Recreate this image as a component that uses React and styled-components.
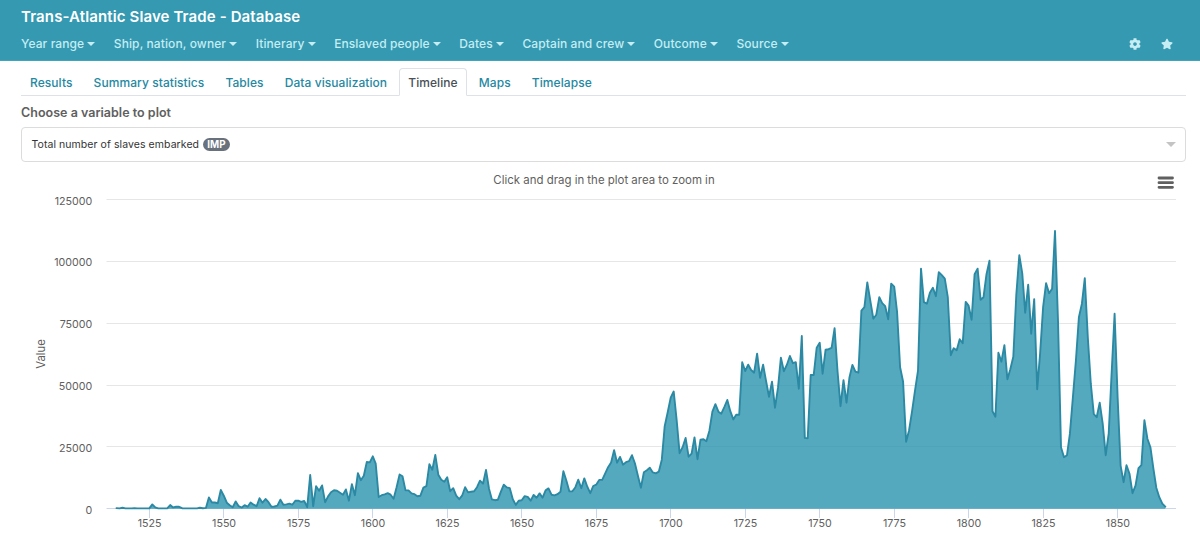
import { useState } from "react";
import styled, { createGlobalStyle } from "styled-components";
import { FaCog, FaStar } from "react-icons/fa";

const GlobalStyle = createGlobalStyle`
  body {
    margin: 0;
    background: #fff;
    font-family: Inter, "Liberation Sans", sans-serif;
  }
`

const StyledHeader = styled.header`
  box-sizing: border-box;
  height: 61px;
  padding: 7px 26.6px 0 21px;
  background-color: #3499b1;
  border-bottom: 1px solid #43a3b9;
`

const StyledTitle = styled.h1`
  margin: 0;
  font-size: 15px;
  line-height: 19px;
  font-weight: 600;
  letter-spacing: 0.12px;
  color: #fff;
`

const StyledNav = styled.nav`
  display: flex;
  align-items: center;
  gap: 18.6px;
  height: 16px;
  margin-top: 10px;
  color: #c5edf3;
`

const StyledNavItem = styled.span`
  display: flex;
  align-items: center;
  gap: 3px;
  font-size: 12px;
  line-height: 16px;
  font-weight: 500;
  letter-spacing: 0.1px;
  white-space: nowrap;
  cursor: pointer;
`

const StyledCaret = styled.i`
  border: ${(props) => props.$size}px solid transparent;
  border-top-color: ${(props) => props.$color};
  border-bottom: 0;
`

const StyledActions = styled.div`
  display: flex;
  gap: 20px;
  margin-left: auto;
`

const StyledMain = styled.main`
  padding: 7px 14px 0 21px;
`

const StyledTabs = styled.div`
  display: flex;
  gap: 3.1px;
  height: 27px;
  border-bottom: 1px solid #dee2e6;
`

const StyledTab = styled.button`
  box-sizing: border-box;
  height: 28px;
  padding: 0 8px;
  border: 1px solid ${(props) => (props.$active ? "#dee2e6" : "transparent")};
  border-bottom-color: ${(props) => (props.$active ? "#fff" : "transparent")};
  border-radius: 4px 4px 0 0;
  background: ${(props) => (props.$active ? "#fff" : "none")};
  color: ${(props) => (props.$active ? "#495057" : "#2488a2")};
  font-family: inherit;
  font-size: 12px;
  font-weight: 500;
  letter-spacing: 0.07px;
  white-space: nowrap;
  cursor: pointer;
`

const StyledLabel = styled.div`
  margin-top: 9px;
  font-size: 12.5px;
  line-height: 16px;
  font-weight: 600;
  letter-spacing: 0.02px;
  color: #606060;
`

const StyledSelect = styled.div`
  box-sizing: border-box;
  display: flex;
  align-items: center;
  height: 35px;
  margin-top: 6px;
  padding: 0 9px 0 9.5px;
  border: 1px solid #dcdcdc;
  border-radius: 4px;
  font-size: 10.5px;
  letter-spacing: 0.07px;
  color: #333;
`

const StyledBadge = styled.span`
  margin: 0 auto 0 4px;
  padding: 0 4.2px;
  border-radius: 7px;
  background-color: #68717c;
  color: #fff;
  font-size: 9.8px;
  line-height: 13.5px;
  font-weight: 700;
`

const StyledChart = styled.svg`
  display: block;
  width: 1200px;
  height: 389px;
  margin-left: -21px;
  font-family: Inter, "Liberation Sans", sans-serif;
  fill: #606060;
`

const StyledTick = styled.text`
  font-size: 10.7px;
`

const StyledChartText = styled.text`
  font-size: ${(props) => props.$size}px;
  text-anchor: middle;
`

const menus = [
  "Year range",
  "Ship, nation, owner",
  "Itinerary",
  "Enslaved people",
  "Dates",
  "Captain and crew",
  "Outcome",
  "Source",
];

const tabs = [
  "Results",
  "Summary statistics",
  "Tables",
  "Data visualization",
  "Timeline",
  "Maps",
  "Timelapse",
];

const FIRST_YEAR = 1514;

// one point per year, as height above the baseline
const heights = [
  0.6, 0.3, 0.9, 0.3, 0.3, 0.3, 0.4, 0.3, 0.3, 0.3, 0.3, 0.3, 4.3, 1.3, 0.3, 0.3,
  0.3, 0.3, 3.6, 1.3, 1.9, 1.9, 0.5, 0.3, 0.3, 0.3, 0.3, 0.3, 0.9, 0.4, 0.8,
  11.3, 6.2, 6.2, 5.5, 18.7,
  13, 6, 3.5, 1.5, 7.3, 2.5, 1.2, 3.5, 2, 6.2,
  4, 2.5, 10.5, 6, 9.7, 6.5, 2, 2.2, 3, 9,
  4, 4.3, 5, 4, 8, 8, 6.8, 7.7, 1.5, 33.7,
  2.5, 22.5, 18, 23.3, 6.5, 12.3, 16.5, 18.5, 18, 16,
  14, 19.3, 8, 24.5, 13.5, 35.5, 28.5, 33, 46.7, 46.3,
  52.4, 45, 11.7, 13.5, 14.3, 15.5, 14, 10, 21.5, 34.2,
  32.5, 18.3, 18.3, 15.3, 14.5, 12.5, 13, 21, 22.5, 44.5,
  39, 53.8, 34, 29, 27, 31.5, 17.5, 20.5, 13, 9.5,
  13, 21.5, 16.3, 17, 17.5, 21.5, 28, 25, 38.8, 20,
  9.3, 8.5, 9, 17, 24, 21.3, 20.5, 9.5, 3.8, 8,
  8.5, 12.6, 11.8, 8, 13.8, 11, 15.3, 11, 18.3, 20.3,
  14, 13.3, 14.5, 17, 37.5, 28, 17.3, 17.5, 21.5, 29,
  20.5, 30.3, 22, 15.5, 22.7, 24, 28.8, 28.8, 35, 41.5,
  46.3, 58.5, 46, 51.8, 44, 46.5, 47.5, 53.5, 45.5, 33,
  21, 36.5, 38.5, 41, 36.3, 35.3, 37, 49, 82.5, 96.5,
  111, 117.2, 88, 55.5, 61.5, 70.7, 52, 55, 71.3, 49.5,
  69, 69.5, 67.5, 78, 97, 104.5, 97, 95, 101.5, 108.7,
  97.5, 89.3, 94, 94, 146.5, 137.7, 144, 138.7, 136, 155,
  131, 144, 128, 112, 127, 101, 121, 151, 137.5, 144,
  152.7, 145.5, 146.5, 120, 172.7, 70.8, 70.5, 133.7, 133.7, 161,
  166, 135, 159, 159.5, 160.8, 180.5, 138, 102.5, 128.5, 106,
  131.5, 143.8, 137, 136, 198, 201.5, 226.3, 208, 190, 194,
  211.5, 205.5, 202.5, 189.5, 225, 222, 196.5, 141.5, 127, 67,
  78, 97, 118, 138, 240, 206.5, 205, 216, 221, 212.5,
  236.5, 233.5, 230, 211.5, 153.5, 160.5, 158.5, 169.5, 165.5, 206.8,
  203, 189, 234.5, 240, 209, 211.5, 234.5, 248, 97.5, 92,
  156, 147, 163.5, 129.5, 139.5, 152, 214, 253.5, 235, 196,
  224, 175, 209.5, 119.5, 155, 201.5, 225.5, 215.5, 220, 277.7,
  188, 61.5, 51.5, 53.5, 75, 111.5, 148, 191.5, 205, 230.5,
  171.5, 125, 94.5, 91.5, 106, 85, 53.5, 75, 135, 195,
  112, 43, 26.5, 43.5, 35, 15.5, 23, 40.5, 43.5, 88.5,
  70, 61.5, 40, 21, 11.5, 5, 2,
];

const yTicks = [0, 25000, 50000, 75000, 100000, 125000];
const xTicks = [1525, 1550, 1575, 1600, 1625, 1650, 1675, 1700, 1725, 1750, 1775, 1800, 1825, 1850];

const BASE = 346.7;
const getX = (year) => 149.3 + (year - 1525) * 2.9794;
const getY = (value) => BASE - value * 0.002472;
// half pixel keeps the 1px lines sharp
const snap = (n) => Math.floor(n) + 0.5;

const TimelineChart = () => {
  const points = heights.map((h, i) => `${getX(FIRST_YEAR + i).toFixed(1)},${(BASE - h).toFixed(1)}`);
  const line = "M" + points.join("L");
  const lastX = getX(FIRST_YEAR + heights.length - 1);

  return (
    <StyledChart viewBox="0 0 1200 389">
      <StyledChartText x="604" y="22.4" $size={11.45}>Click and drag in the plot area to zoom in</StyledChartText>
      <path d="M1159 16h13.5M1159 20.7h13.5M1159 25.3h13.5" stroke="#606060" strokeWidth="2.8" strokeLinecap="round" />
      {
        yTicks.map((value) =>
          <g key={value}>
            <path d={`M106.5 ${snap(getY(value))}H1176`} stroke={value ? "#e6e6e6" : "#ccd6eb"} />
            <StyledTick x="92.3" y={getY(value) + 4.8} textAnchor="end">{value}</StyledTick>
          </g>
        )
      }
      {
        xTicks.map((year) =>
          <g key={year}>
            <path d={`M${snap(getX(year))} 347v9`} stroke="#ccd6eb" />
            <StyledTick x={getX(year) + 0.3} y="364.8" textAnchor="middle">{year}</StyledTick>
          </g>
        )
      }
      <path d={`${line}L${lastX} ${BASE}L${getX(FIRST_YEAR)} ${BASE}Z`} fill="#2a93af" fillOpacity="0.8" />
      <path d={line} fill="none" stroke="#2b89a3" strokeWidth="1.9" strokeLinejoin="round" strokeLinecap="round" />
      <StyledChartText transform="translate(45 192) rotate(-90)" $size={11.3}>Value</StyledChartText>
    </StyledChart>
  );
};

const App = () => {
  const [activeTab, setActiveTab] = useState("Timeline");

  return (
    <>
      <GlobalStyle />
      <StyledHeader>
        <StyledTitle>Trans-Atlantic Slave Trade - Database</StyledTitle>
        <StyledNav>
          {
            menus.map((menu) =>
              <StyledNavItem key={menu}>
                {menu}
                <StyledCaret $size={4} $color="#c5edf3" />
              </StyledNavItem>
            )
          }
          <StyledActions>
            <FaCog size={12} />
            <FaStar size={12} />
          </StyledActions>
        </StyledNav>
      </StyledHeader>
      <StyledMain>
        <StyledTabs>
          {
            tabs.map((tab) =>
              <StyledTab key={tab} $active={tab === activeTab} onClick={() => setActiveTab(tab)}>
                {tab}
              </StyledTab>
            )
          }
        </StyledTabs>
        <StyledLabel>Choose a variable to plot</StyledLabel>
        <StyledSelect>
          Total number of slaves embarked
          <StyledBadge>IMP</StyledBadge>
          <StyledCaret $size={5} $color="#c4c4c4" />
        </StyledSelect>
        <TimelineChart />
      </StyledMain>
    </>
  )
}

export default App;
